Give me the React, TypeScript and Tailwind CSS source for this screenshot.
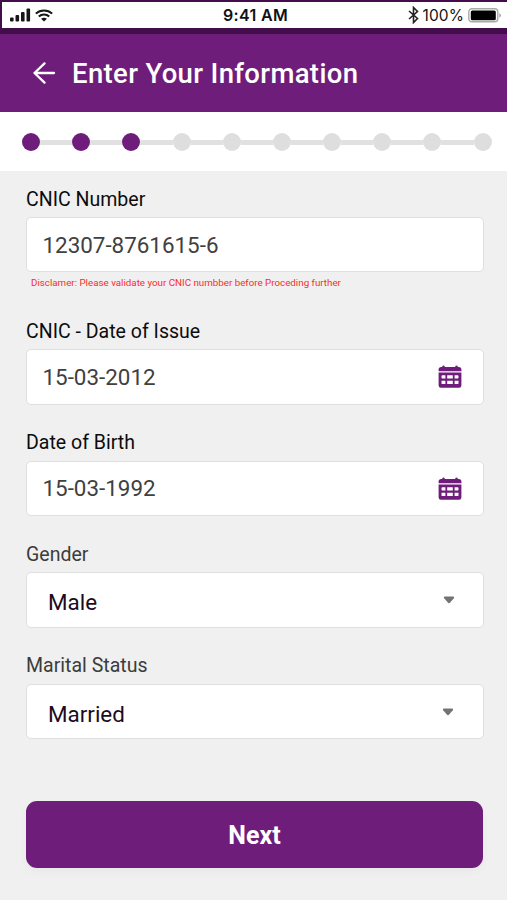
import type { ReactNode } from "react";

const STEPS = 10;
const CURRENT = 3;

function StatusBar() {
  return (
    <div className="h-[34px] bg-[#430d4c] pt-[2px] pl-[2px]">
      <div className="flex h-[26px] items-center bg-white pr-[5px] pl-[8px] text-[#111]">
        <div className="flex flex-1 items-center gap-[4px]">
          <svg width="21" height="14" viewBox="0 0 21 14" fill="#161616">
            <rect x="0" y="9.5" width="3.6" height="4" rx="1" />
            <rect x="5.5" y="7" width="3.6" height="6.5" rx="1" />
            <rect x="11" y="4" width="3.6" height="9.5" rx="1" />
            <rect x="16.5" y="0.5" width="3.6" height="13" rx="1" />
          </svg>
          <svg width="18" height="13" viewBox="0 0 17 13" preserveAspectRatio="none" fill="none" stroke="#161616" strokeWidth="2">
            <path d="M0.8 4.6C5.1 0.5 11.9 0.5 16.2 4.6" />
            <path d="M3.6 7.5C6.4 4.9 10.6 4.9 13.4 7.5" />
            <path d="M8.5 12.4L5.7 9.7C7.2 8.3 9.8 8.3 11.3 9.7Z" fill="#161616" stroke="none" />
          </svg>
        </div>
        <span className="pr-[1px] font-[Inter,sans-serif] text-[16px] leading-[26px] font-semibold tracking-[0.35px] whitespace-nowrap">
          9:41 AM
        </span>
        <div className="flex flex-1 items-center justify-end">
          <svg width="11" height="18" viewBox="0 0 11 18" fill="none" stroke="#222" strokeWidth="1.6">
            <path d="M1 5L9.5 12.5L5.5 16.5V1.5L9.5 5.5L1 13" />
          </svg>
          <span className="ml-[4px] pt-[2px] font-[Inter,sans-serif] text-[15.5px] leading-[26px] tracking-[0.1px]">100%</span>
          <svg className="ml-[4px]" width="34" height="15" viewBox="0 0 34 15">
            <rect x="0.8" y="0.8" width="29" height="13" rx="3" fill="#fff" stroke="#aaa" strokeWidth="1.4" />
            <rect x="2.8" y="2.6" width="25" height="9.6" rx="1.5" fill="#000" />
            <path d="M31.4 5.2C33.2 5.8 33.2 9 31.4 9.6Z" fill="#999" />
          </svg>
        </div>
      </div>
    </div>
  );
}

function Header() {
  return (
    <header className="flex h-[78px] items-center bg-[#6f1d7b] pl-[33px] text-white">
      <svg width="23" height="22" viewBox="0 0 23 22" fill="none" stroke="#fff" strokeWidth="2.3" strokeLinecap="round" strokeLinejoin="round">
        <path d="M21 11H1.5M11.5 1.4L1.5 11L11.5 20.6" />
      </svg>
      <h1 className="ml-[16px] pt-[2px] text-[27.5px] leading-[32px] font-medium tracking-[0.35px] whitespace-nowrap">
        Enter Your Information
      </h1>
    </header>
  );
}

function Progress() {
  return (
    <div className="flex h-[59px] items-center bg-white pt-px pr-[15.5px] pl-[22px]">
      {Array.from({ length: STEPS }, (_, i) => (
        <div key={i} className={i === 0 ? "flex items-center" : "flex flex-1 items-center"}>
          {i > 0 && <div className="mt-px h-[5px] flex-1 bg-[#e1e1e1]" />}
          <div className={i < CURRENT ? "size-[18px] rounded-full bg-[#6f1d7b]" : "size-[18px] rounded-full bg-[#dedede]"} />
        </div>
      ))}
    </div>
  );
}

function CalendarIcon() {
  return (
    <svg width="24" height="23" viewBox="0 0 24 23" fill="#6f1d7b">
      <path d="M3.2 2H4.3V1.1Q5.5 0 6.7 1.1V2H17.3V1.1Q18.5 0 19.7 1.1V2H20.8Q23.4 2 23.4 4.6V6.2H0.6V4.6Q0.6 2 3.2 2Z" />
      <path
        fillRule="evenodd"
        d="M0.6 7.6H23.4V20.4Q23.4 22.8 21 22.8H3Q0.6 22.8 0.6 20.4ZM4.4 10.2Q3.5 10.2 3.5 11.1V12.6Q3.5 13.5 4.4 13.5H7.4V10.2ZM9.2 10.2V13.5H14.8V10.2ZM16.6 10.2V13.5H19.6Q20.5 13.5 20.5 12.6V11.1Q20.5 10.2 19.6 10.2ZM3.5 15.8V18.2Q3.5 19.1 4.4 19.1H7.4V15.8ZM9.2 15.8V19.1H14.8V15.8ZM16.6 15.8V19.1H19.6Q20.5 19.1 20.5 18.2V15.8Z"
      />
    </svg>
  );
}

function Caret() {
  return (
    <svg className="mt-px" width="12" height="8" viewBox="0 0 12 8" fill="#737373">
      <path d="M1.8 0.5H10.2Q12 0.8 10.8 2.3L7.2 6.5Q6 7.8 4.8 6.5L1.2 2.3Q0 0.8 1.8 0.5Z" />
    </svg>
  );
}

interface FieldProps {
  label: string;
  labelClass?: string;
  boxClass: string;
  children: ReactNode;
}

function Field({ label, labelClass = "text-[#0c0c0c]", boxClass, children }: FieldProps) {
  return (
    <div>
      <div className={`h-[28px] pt-[0.7px] text-[19.55px] leading-[20px] whitespace-nowrap ${labelClass}`}>{label}</div>
      <div className={`flex h-[55.5px] items-center justify-between rounded-[5px] border-[1.5px] border-[#dfdfdf] bg-white ${boxClass}`}>
        {children}
      </div>
    </div>
  );
}

const valueClass = "text-[22.4px] leading-[28px] text-[#404040] whitespace-nowrap";
const choiceClass = "pt-[5px] text-[22.4px] leading-[28px] text-[#1d0b22] whitespace-nowrap";

export default function App() {
  return (
    <div className="flex h-[900px] w-[507px] flex-col overflow-hidden bg-[#f0f0f0] font-[Roboto,sans-serif]">
      <StatusBar />
      <Header />
      <Progress />
      <main className="flex flex-col pt-[17.9px] pr-[23px] pl-[26px]">
        <Field label="CNIC Number" boxClass="pl-[15.5px]">
          <span className={valueClass}>12307-8761615-6</span>
        </Field>
        <p className="h-[48.7px] pt-[4px] pl-[5px] text-[9.77px] leading-[14px] whitespace-nowrap text-[#fb2b2b]">
          Disclamer: Please validate your CNIC numbber before Proceding further
        </p>
        <div className="flex flex-col gap-[28px]">
          <Field label="CNIC - Date of Issue" boxClass="pr-[21px] pl-[15.5px]">
            <span className={valueClass}>15-03-2012</span>
            <CalendarIcon />
          </Field>
          <Field label="Date of Birth" boxClass="pr-[21px] pl-[15.5px]">
            <span className={valueClass}>15-03-1992</span>
            <CalendarIcon />
          </Field>
          <Field label="Gender" labelClass="text-[#3c3c3c]" boxClass="pr-[28px] pl-[21px]">
            <span className={choiceClass}>Male</span>
            <Caret />
          </Field>
          <Field label="Marital Status" labelClass="text-[#3c3c3c]" boxClass="pr-[29px] pl-[21px]">
            <span className={choiceClass}>Married</span>
            <Caret />
          </Field>
        </div>
        <button className="mt-[62px] mr-px h-[67px] rounded-[11px] bg-[#6f1d7b] pt-[3px] text-[25px] leading-[30px] font-bold text-white shadow-[0_4px_8px_rgba(0,0,0,0.03)]">
          Next
        </button>
      </main>
    </div>
  );
}
